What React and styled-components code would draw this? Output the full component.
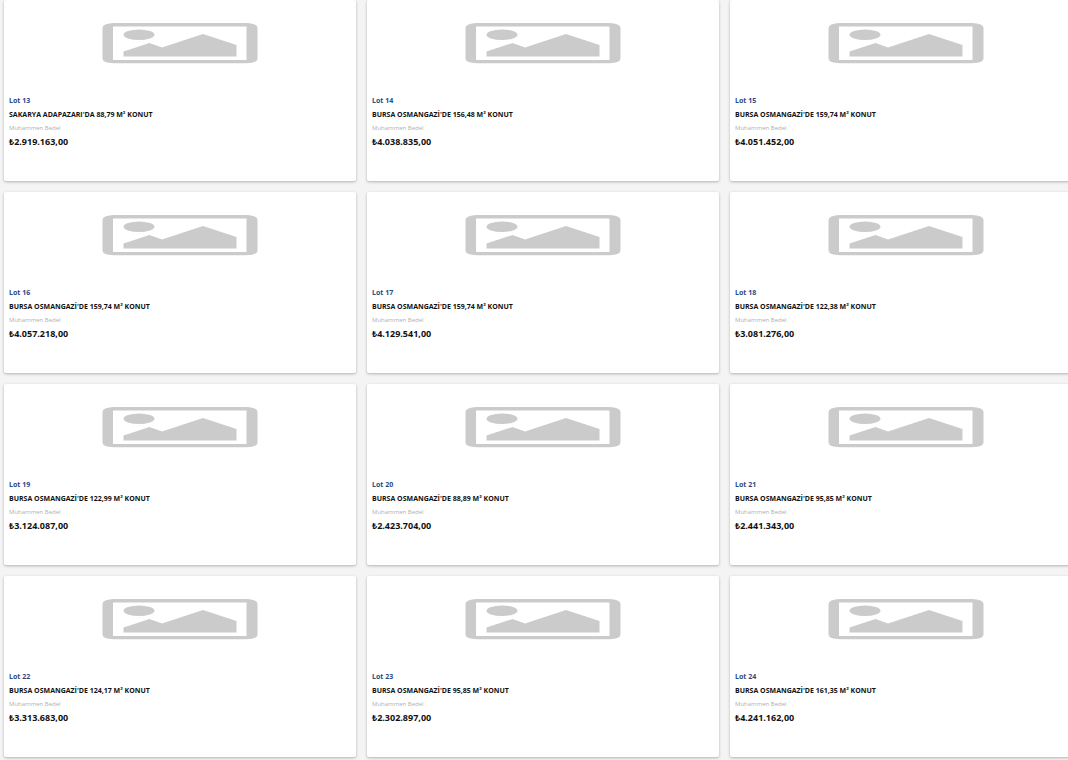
import React from 'react';
import styled, { createGlobalStyle } from 'styled-components';

const GlobalStyle = createGlobalStyle`
  * {
    box-sizing: border-box;
  }

  body {
    margin: 0;
    background: #f4f4f4;
    font-family: 'Open Sans', 'Noto Sans', sans-serif;
  }
`;

const Page = styled.main`
  overflow: hidden;
  padding-left: 4px;
`;

const LotGrid = styled.div`
  display: grid;
  grid-template-columns: repeat(3, 1fr);
  gap: 11px;
  margin-right: -14px;
  padding-bottom: 3px;
`;

const Card = styled.article`
  background: #fff;
  border-radius: 2px;
  box-shadow: 0 1px 3px rgba(0, 0, 0, 0.28);
  padding-bottom: 33px;
`;

const CardImage = styled.div`
  display: flex;
  justify-content: center;
  padding: 23px 0 30px;
`;

const CardBody = styled.div`
  padding: 0 5px;
`;

const LotNumber = styled.div`
  color: #2b4a85;
  font-size: 7px;
  font-weight: 700;
  line-height: 14px;
`;

const LotTitle = styled.h2`
  margin: 0;
  color: #111;
  font-size: 7px;
  font-weight: 700;
  line-height: 14px;
`;

const PriceLabel = styled.div`
  color: #b0b0b0;
  font-size: 6px;
  line-height: 13px;
`;

const Price = styled.div`
  color: #111;
  font-size: 9px;
  font-weight: 700;
  line-height: 13px;
`;

const lots = [
  { no: 13, title: "SAKARYA ADAPAZARI'DA 88,79 M² KONUT", price: '2.919.163,00' },
  { no: 14, title: "BURSA OSMANGAZİ'DE 156,48 M² KONUT", price: '4.038.835,00' },
  { no: 15, title: "BURSA OSMANGAZİ'DE 159,74 M² KONUT", price: '4.051.452,00' },
  { no: 16, title: "BURSA OSMANGAZİ'DE 159,74 M² KONUT", price: '4.057.218,00' },
  { no: 17, title: "BURSA OSMANGAZİ'DE 159,74 M² KONUT", price: '4.129.541,00' },
  { no: 18, title: "BURSA OSMANGAZİ'DE 122,38 M² KONUT", price: '3.081.276,00' },
  { no: 19, title: "BURSA OSMANGAZİ'DE 122,99 M² KONUT", price: '3.124.087,00' },
  { no: 20, title: "BURSA OSMANGAZİ'DE 88,89 M² KONUT", price: '2.423.704,00' },
  { no: 21, title: "BURSA OSMANGAZİ'DE 95,85 M² KONUT", price: '2.441.343,00' },
  { no: 22, title: "BURSA OSMANGAZİ'DE 124,17 M² KONUT", price: '3.313.683,00' },
  { no: 23, title: "BURSA OSMANGAZİ'DE 95,85 M² KONUT", price: '2.302.897,00' },
  { no: 24, title: "BURSA OSMANGAZİ'DE 161,35 M² KONUT", price: '4.241.162,00' }
];

const Placeholder = () => (
  <svg width="156" height="41" viewBox="0 0 156 41" fill="#cbcbcb" aria-hidden="true">
    <path
      fillRule="evenodd"
      d="M12 0H144Q155.500 0.500 155.500 5V35.500Q155.500 40 144 40.200H12Q0.500 40 0.500 35.500V5Q0.500 0.500 12 0ZM11 3.500V37H144.500V3.500Z"
    />
    <ellipse cx="37" cy="11.700" rx="15.500" ry="5.300" />
    <path d="M21.500 33.500V28.500L47.500 20L60 24.500L101 11L134.500 22V33.500Z" />
  </svg>
);

const LotCard = ({ no, title, price }) => (
  <Card>
    <CardImage>
      <Placeholder />
    </CardImage>
    <CardBody>
      <LotNumber>Lot {no}</LotNumber>
      <LotTitle>{title}</LotTitle>
      <PriceLabel>Muhammen Bedel</PriceLabel>
      <Price>₺{price}</Price>
    </CardBody>
  </Card>
);

const App = () => (
  <>
    <GlobalStyle />
    <Page>
      <LotGrid>
        {lots.map((lot) => (
          <LotCard key={lot.no} no={lot.no} title={lot.title} price={lot.price} />
        ))}
      </LotGrid>
    </Page>
  </>
);

export default App;
